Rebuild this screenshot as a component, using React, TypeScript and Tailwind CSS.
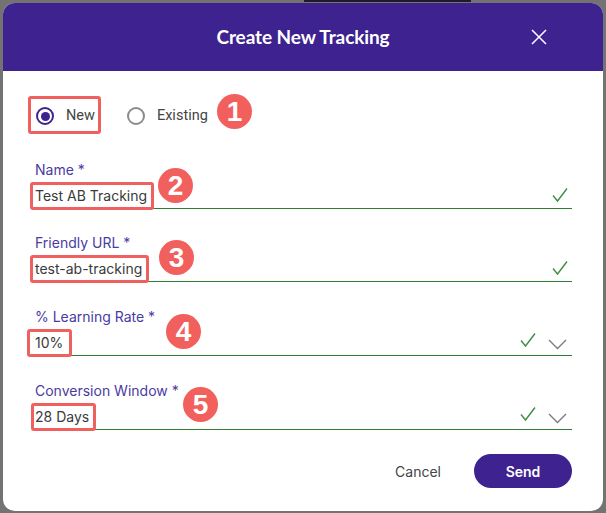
import React from "react";

const Check = ({ className = "" }: { className?: string }) => (
  <svg width="16" height="16" viewBox="0 0 16 16" className={className} fill="none">
    <polyline points="1,8.5 5.5,14 15,1.5" stroke="#3f8f43" strokeWidth="1.4" />
  </svg>
);

const Chevron = ({ className = "" }: { className?: string }) => (
  <svg width="19" height="11" viewBox="0 0 19 11" className={className} fill="none">
    <polyline points="1,1 9.5,9.5 18,1" stroke="#7a7a7a" strokeWidth="1.3" />
  </svg>
);

const Badge = ({ n, className }: { n: string; className: string }) => (
  <div
    className={`absolute w-[35px] h-[35px] rounded-full bg-[#f2605e] flex items-center justify-center text-white text-[28px] font-bold leading-none ${className}`}
    style={{ fontFamily: '"Liberation Sans", Arial, sans-serif' }}
  >
    {n}
  </div>
);

type FieldProps = {
  label: string;
  value: string;
  select?: boolean;
  boxClass: string;
  mt: string;
};

const Field = ({ label, value, select, boxClass, mt }: FieldProps) => (
  <div className={mt}>
    <div className="text-[14px] leading-5 text-[#4a3ba3]">{label}</div>
    <div className="h-[29px] pt-[2px] flex items-center border-b border-[#2e7d32]">
      <div className="flex-1">
        <span className="relative inline-block text-[14px] leading-5 text-[#3a3a3a]">
          {value}
          <span className={`absolute -top-[4px] -bottom-[4px] border-[3px] border-[#f0605e] rounded-[3px] ${boxClass}`} />
        </span>
      </div>
      {select ? (
        <div className="flex items-center gap-[12px] mr-[5px]">
          <Check className="mb-[4px]" />
          <Chevron className="mt-[4px]" />
        </div>
      ) : (
        <Check className="mr-[4px]" />
      )}
    </div>
  </div>
);

export default function App() {
  return (
    <div
      className="relative w-[606px] h-[513px] bg-[#737373] overflow-hidden pt-[3px] pl-[3px]"
      style={{ fontFamily: 'Inter, "Liberation Sans", sans-serif' }}
    >
      <div className="absolute top-0 left-[304px] w-[167px] h-[2px] bg-[#1e1c2a]" />
      <div className="relative w-[600px] h-[508px] bg-white rounded-[12px] overflow-hidden flex flex-col">
        <div className="h-[68px] bg-[#3e2290] grid grid-cols-[1fr_auto_1fr] items-center">
          <div />
          <div
            className="text-white text-[19px] font-bold tracking-[-0.1px]"
            style={{ fontFamily: 'Lato, "Open Sans", sans-serif' }}
          >
            Create New Tracking
          </div>
          <div className="flex justify-end pr-[56px]">
            <svg width="16" height="16" viewBox="0 0 16 16" fill="none">
              <path d="M1 1L15 15M15 1L1 15" stroke="white" strokeWidth="1.5" />
            </svg>
          </div>
        </div>

        <div className="flex-1 pl-[32px] pr-[31px] pt-[26px] flex flex-col">
          <div
            className="h-[38px] flex items-center text-[14.5px] text-[#444]"
            style={{ fontFamily: 'Roboto, "Liberation Sans", sans-serif' }}
          >
            <div className="relative h-full flex items-center ml-[1px] gap-[12px]">
              <span className="w-[18px] h-[18px] rounded-full border-2 border-[#3e2290] flex items-center justify-center">
                <span className="w-[9px] h-[9px] rounded-full bg-[#3e2290]" />
              </span>
              <span>New</span>
              <span className="absolute -left-[8px] -right-[6px] -top-[1px] bottom-[1px] border-[3px] border-[#f0605e] rounded-[3px]" />
            </div>
            <div className="flex items-center ml-[32px] gap-[12px]">
              <span className="w-[18px] h-[18px] rounded-full border-2 border-[#8c8c8c]" />
              <span>Existing</span>
            </div>
          </div>

          <Field label="Name *" value="Test AB Tracking" boxClass="-left-[5px] -right-[7px]" mt="mt-[25px]" />
          <Field label="Friendly URL *" value="test-ab-tracking" boxClass="-left-[5px] -right-[7px]" mt="mt-[24px]" />
          <Field label="% Learning Rate *" value="10%" select boxClass="-left-[8px] -right-[9px]" mt="mt-[25px]" />
          <Field label="Conversion Window *" value="28 Days" select boxClass="-left-[4px] -right-[7px]" mt="mt-[25px]" />

          <div className="mt-[24px] flex justify-end items-center gap-[33px]">
            <span className="text-[14px] text-[#444]">Cancel</span>
            <button className="w-[98px] h-[34px] rounded-full bg-[#3e2290] text-white text-[14px] font-semibold">
              Send
            </button>
          </div>
        </div>

        <Badge n="1" className="left-[214px] top-[91px]" />
        <Badge n="2" className="left-[155px] top-[165px]" />
        <Badge n="3" className="left-[156px] top-[237px]" />
        <Badge n="4" className="left-[163px] top-[311px]" />
        <Badge n="5" className="left-[180px] top-[384px]" />
      </div>
    </div>
  );
}
